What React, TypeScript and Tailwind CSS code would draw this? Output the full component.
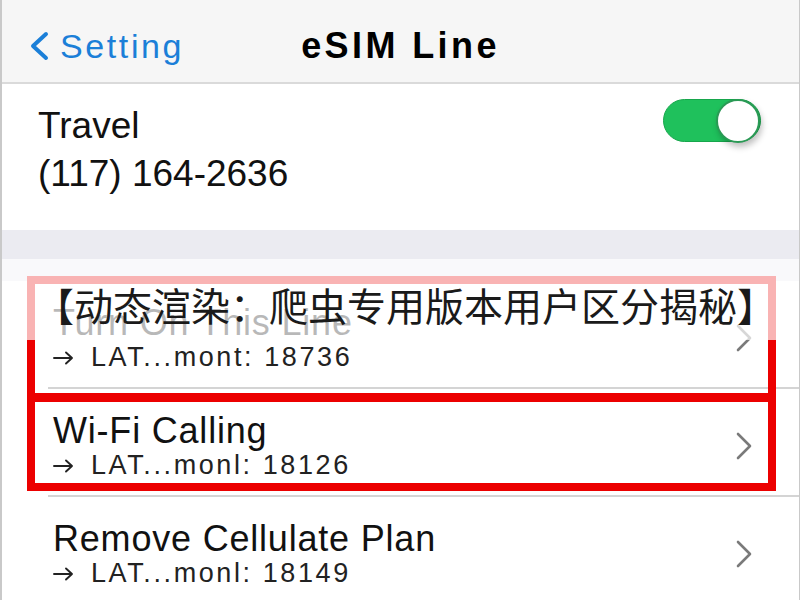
import React from "react";

const sans = { fontFamily: '"Liberation Sans", Arial, sans-serif' };

function Chevron() {
  return (
    <svg width="18" height="28" viewBox="0 0 18 28" fill="none">
      <path d="M3 2 L15 14 L3 26" stroke="#7a7a7a" strokeWidth="2.6" strokeLinecap="round" strokeLinejoin="round" />
    </svg>
  );
}

function Arrow() {
  return (
    <svg width="21" height="14" viewBox="0 0 21 14" fill="none" className="mr-[17px] mt-[1px]">
      <path d="M1 7 H19 M13 1.5 L19 7 L13 12.5" stroke="#222" strokeWidth="1.9" strokeLinecap="round" strokeLinejoin="round" />
    </svg>
  );
}

function Row({ title, sub, border = true }: { title: string; sub: string; border?: boolean }) {
  return (
    <div className="relative h-[108px] flex items-center pl-[51px] pr-[46px] pt-[6px]">
      <div className="flex-1 flex flex-col">
        <div className="text-[36px] leading-[36px] text-[#111] tracking-[0.8px]">{title}</div>
        <div className="mt-[2px] text-[27px] leading-[28px] text-[#222] tracking-[2.6px] flex items-center">
          <Arrow />
          <span>{sub}</span>
        </div>
      </div>
      <Chevron />
      {border && <div className="absolute left-[46px] right-0 bottom-0 h-[2px] bg-[#d4d4d4]" />}
    </div>
  );
}

export default function App() {
  return (
    <div className="relative w-[800px] h-[600px] overflow-hidden bg-white border-l-2 border-r border-[#c9c9c9]" style={sans}>
      {/* Nav bar */}
      <div className="h-[84px] bg-[#f6f6f6] border-b-2 border-[#dadada] grid grid-cols-[1fr_auto_1fr] items-center pt-[10px]">
        <div className="flex items-center pl-[26px] gap-[10px]">
          <svg width="22" height="30" viewBox="0 0 22 30" fill="none">
            <path d="M18 3 L5 15 L18 27" stroke="#1b7fd8" strokeWidth="4" strokeLinecap="round" strokeLinejoin="round" />
          </svg>
          <span className="text-[34px] text-[#1b7fd8] tracking-[2.6px]">Setting</span>
        </div>
        <div className="text-[36px] font-bold text-black tracking-[3.4px]">eSIM Line</div>
        <div />
      </div>

      {/* Travel section */}
      <div className="h-[146px] flex justify-between pl-[36px] pr-[38px]">
        <div className="flex flex-col pt-[20px]">
          <div className="text-[37px] leading-[44px] text-[#111]">Travel</div>
          <div className="text-[37px] leading-[44px] text-[#111] mt-[4px]">(117) 164-2636</div>
        </div>
        <div className="mt-[15px] w-[98px] h-[43px] rounded-full bg-[#1fc15c] border border-[#17a64c] flex items-center justify-end">
          <div className="w-[44px] h-[44px] rounded-full bg-white border-2 border-[#2a9a55] shadow-[2px_4px_6px_rgba(0,0,0,0.25)]" />
        </div>
      </div>

      {/* Gray band */}
      <div className="h-[51px] bg-[#ebebf1]" />

      {/* List */}
      <div className="bg-white">
        <Row title="Turn On This Line" sub="LAT...mont: 18736" />
        <Row title="Wi-Fi Calling" sub="LAT...monl: 18126" />
        <Row title="Remove Cellulate Plan" sub="LAT...monl: 18149" border={false} />
      </div>

      {/* Red annotation boxes */}
      <div className="absolute left-[25px] top-[276px] w-[749px] h-[126px] border-[8px] border-[#ec0000]" />
      <div className="absolute left-[25px] top-[393px] w-[749px] h-[98px] border-[8px] border-[#ec0000]" />

      {/* Caption overlay */}
      <div className="absolute left-0 top-[259px] w-[800px] h-[81px] bg-white/70 flex items-center pl-[33px] pt-[10px]">
        <span
          className="text-[39px] leading-none text-[#1a1a1a] whitespace-nowrap"
          style={{ fontFamily: '"Noto Sans CJK SC", "Noto Sans", sans-serif' }}
        >
          【动态渲染：爬虫专用版本用户区分揭秘】
        </span>
      </div>
    </div>
  );
}
